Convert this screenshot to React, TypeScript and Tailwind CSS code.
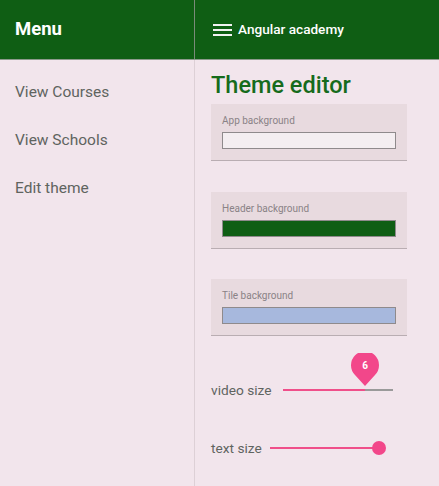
import React from "react";

function Card({ label, color, top }: { label: string; color: string; top: string }) {
  return (
    <div className={`${top} w-[196px] bg-[#e8dadf] border-b border-[#b9adb2] px-[11px] pt-[10px] pb-[11px]`}>
      <div className="text-[10px] leading-[13px] text-[#8a8286]">{label}</div>
      <div className="mt-[5px] h-[17px] w-[174px] border border-[#8f8a8c]" style={{ backgroundColor: color }} />
    </div>
  );
}

export default function App() {
  return (
    <div
      className="w-[439px] h-[486px] bg-[#f2e5ec] flex flex-col overflow-hidden"
      style={{ fontFamily: "Roboto, 'Liberation Sans', sans-serif" }}
    >
      <div className="h-[60px] bg-[#0f5e14] flex border-b border-[#8c9a8c] shrink-0">
        <div className="w-[195px] border-r border-[#7a8a7a] flex items-center pl-[15px]">
          <span className="text-white text-[18.5px] font-bold">Menu</span>
        </div>
        <div className="flex items-center pl-[18px] gap-[6px]">
          <svg width="19" height="14" viewBox="0 0 19 14">
            <rect x="0" y="1" width="19" height="2" fill="#f2f2f2" />
            <rect x="0" y="6" width="19" height="2" fill="#f2f2f2" />
            <rect x="0" y="11" width="19" height="2" fill="#f2f2f2" />
          </svg>
          <span className="text-white text-[13.6px] font-medium">Angular academy</span>
        </div>
      </div>
      <div className="flex flex-1">
        <div className="w-[195px] border-r border-[#ddd0d6] pl-[15px] pt-[21px] flex flex-col gap-[26px] shrink-0">
          <div className="text-[15.5px] leading-[22px] text-[#5f645f]">View Courses</div>
          <div className="text-[15.5px] leading-[22px] text-[#5f645f]">View Schools</div>
          <div className="text-[15.5px] leading-[22px] text-[#5f645f]">Edit theme</div>
        </div>
        <div className="pl-[16px] flex flex-col">
          <div className="mt-[10px] text-[23.5px] leading-[31px] font-medium text-[#166b1c]">Theme editor</div>
          <Card label="App background" color="#f4eef1" top="mt-[3px]" />
          <Card label="Header background" color="#0f5e14" top="mt-[31px]" />
          <Card label="Tile background" color="#a7b8dd" top="mt-[30px]" />
          <div className="mt-[43px] flex items-center h-[22px]">
            <span className="text-[13.7px] text-[#5f645f] w-[72px]">video size</span>
            <div className="relative w-[110px] h-[2px] bg-[#9a9a9a]">
              <div className="absolute left-0 top-0 h-[2px] w-[82px] bg-[#f04f8a]" />
              <div className="absolute left-[68px] top-[-36px] w-[28px] h-[33px]">
                <svg width="28" height="33" viewBox="0 0 28 33">
                  <path d="M14 33 L4 22 A14 14 0 1 1 24 22 Z" fill="#f2478a" />
                </svg>
                <span className="absolute left-0 top-[5px] w-[28px] text-center text-white text-[10px] font-bold">6</span>
              </div>
            </div>
          </div>
          <div className="mt-[36px] flex items-center h-[22px]">
            <span className="text-[13.7px] text-[#5f645f] w-[59px]">text size</span>
            <div className="relative w-[110px] h-[2px] bg-[#f04f8a]">
              <div className="absolute left-[102px] top-[-6px] w-[14px] h-[14px] rounded-full bg-[#f2478a]" />
            </div>
          </div>
        </div>
      </div>
    </div>
  );
}
